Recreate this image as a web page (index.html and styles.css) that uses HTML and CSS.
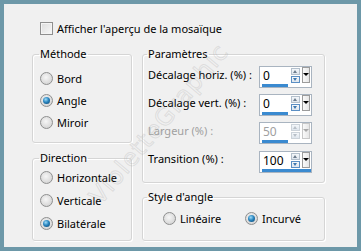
FILE: index.html
```html
<!DOCTYPE html>
<html lang="fr">
<head>
    <meta charset="UTF-8">
    <title>Mosaïque</title>
    <link rel="stylesheet" href="styles.css">
</head>
<body>

<div class="dialog">
    <label class="check-row"><span class="checkbox"></span>Afficher l'aperçu de la mosaïque</label>

    <div class="columns">
        <div class="col-left">
            <fieldset class="group methode">
                <legend>Méthode</legend>
                <div class="option"><span class="radio"></span>Bord</div>
                <div class="option"><span class="radio on"></span>Angle</div>
                <div class="option"><span class="radio"></span>Miroir</div>
            </fieldset>

            <fieldset class="group direction">
                <legend>Direction</legend>
                <div class="option"><span class="radio"></span>Horizontale</div>
                <div class="option"><span class="radio"></span>Verticale</div>
                <div class="option"><span class="radio on"></span>Bilatérale</div>
            </fieldset>
        </div>

        <div class="col-right">
            <fieldset class="group params">
                <legend>Paramètres</legend>
                <div class="param">
                    <span class="param-label">Décalage horiz. (%) :</span>
                    <div class="spin">
                        <div class="spin-top">
                            <span class="spin-value">0</span>
                            <span class="arrows"><i class="up"></i><i class="dn"></i></span>
                            <span class="drop"></span>
                        </div>
                        <span class="bar" style="width: 26px"></span>
                    </div>
                </div>
                <div class="param">
                    <span class="param-label">Décalage vert. (%) :</span>
                    <div class="spin">
                        <div class="spin-top">
                            <span class="spin-value">0</span>
                            <span class="arrows"><i class="up"></i><i class="dn"></i></span>
                            <span class="drop"></span>
                        </div>
                        <span class="bar" style="width: 26px"></span>
                    </div>
                </div>
                <div class="param disabled">
                    <span class="param-label">Largeur (%) :</span>
                    <div class="spin">
                        <div class="spin-top">
                            <span class="spin-value">50</span>
                            <span class="arrows"><i class="up"></i><i class="dn"></i></span>
                            <span class="drop"></span>
                        </div>
                        <span class="bar" style="width: 26px"></span>
                    </div>
                </div>
                <div class="param">
                    <span class="param-label">Transition (%) :</span>
                    <div class="spin">
                        <div class="spin-top">
                            <span class="spin-value">100</span>
                            <span class="arrows"><i class="up"></i><i class="dn"></i></span>
                            <span class="drop"></span>
                        </div>
                        <span class="bar" style="width: 49px"></span>
                    </div>
                </div>
            </fieldset>

            <fieldset class="group style">
                <legend>Style d'angle</legend>
                <div class="inline-options">
                    <div class="option first"><span class="radio"></span>Linéaire</div>
                    <div class="option"><span class="radio on"></span>Incurvé</div>
                </div>
            </fieldset>
        </div>
    </div>

    <div class="watermark">VioletteGraphic</div>
</div>

</body>
</html>
```

FILE: styles.css
```css
body {
    margin: 0;
    font-family: "Noto Sans", "Open Sans", sans-serif;
    font-size: 11px;
    color: #000;
}

.dialog {
    position: relative;
    width: 361px;
    height: 251px;
    box-sizing: border-box;
    border: 4px solid #6d98a8;
    background: #f0f0f0;
    padding: 18px 0 0 28px;
    overflow: hidden;
}

/* case à cocher */
.check-row {
    display: flex;
    align-items: center;
    height: 13px;
    padding-left: 8px;
    line-height: 13px;
}
.checkbox {
    width: 13px;
    height: 13px;
    box-sizing: border-box;
    border: 1px solid #8f8f8f;
    background: linear-gradient(135deg, #dcdcdc, #f8f8f8);
    box-shadow: inset 0 0 0 1px #f4f4f4;
    margin-right: 4px;
}

.columns {
    display: flex;
    gap: 10px;
    margin-top: 11px;
}
.col-left { width: 100px; }
.col-right { width: 183px; }

/* cadres de groupe */
.group {
    margin: 0;
    padding: 0;
    box-sizing: border-box;
    border: 1px solid #d5d5d5;
    border-radius: 3px;
    box-shadow: inset 1px 1px 0 #fff, 1px 1px 0 #fff;
    min-width: 0;
}
.group legend {
    margin-left: -1px;
    padding: 0 1px;
    line-height: 16px;
}
.methode { height: 97px; padding: 5px 0 0 7px; }
.direction { height: 91px; margin-top: 7px; padding: 0 0 0 7px; }
.params { height: 137px; padding: 4px 0 0 5px; }
.style { height: 52px; margin-top: 6px; padding: 2px 0 0 20px; }
.style legend { margin-left: -16px; }

/* boutons radio */
.option {
    display: flex;
    align-items: center;
    height: 22px;
}
.direction .option { height: 23px; }
.radio {
    position: relative;
    width: 13px;
    height: 13px;
    box-sizing: border-box;
    border-radius: 50%;
    border: 1px solid #8e8f8f;
    background: radial-gradient(circle at 45% 40%, #f6f6f6, #d4d4d4 80%);
    margin-right: 4px;
    flex: none;
}
.radio.on::after {
    content: "";
    position: absolute;
    left: 2px;
    top: 2px;
    width: 7px;
    height: 7px;
    border-radius: 50%;
    background: radial-gradient(circle at 40% 35%, #9fdcf8, #2a86c0 45%, #0d4a78 90%);
}

.inline-options { display: flex; }
.inline-options .first { width: 82px; }

/* paramètres */
.param {
    display: flex;
    align-items: center;
    height: 22px;
    margin-bottom: 6px;
}
.param:last-child { height: 23px; }
.param-label {
    width: 111px;
    flex: none;
    padding-bottom: 6px;
    white-space: nowrap;
}
.disabled { color: #a0a0a0; }

.spin {
    width: 53px;
    height: 22px;
    flex: none;
    box-sizing: border-box;
    border: 1px solid #a9b4c0;
    background: #fff;
    display: flex;
    flex-direction: column;
}
.spin-top {
    display: flex;
    height: 16px;
}
.spin-value {
    flex: 1;
    padding: 1px 0 0 3px;
    line-height: 15px;
    font-size: 12px;
}
.arrows {
    display: flex;
    flex-direction: column;
    gap: 1px;
    width: 9px;
    margin-top: 1px;
}
.arrows i {
    position: relative;
    height: 7px;
    box-sizing: border-box;
    border: 1px solid #b4c0cc;
    background: linear-gradient(#f4f7fa, #dfe6ee);
}
.arrows i.dn { border-color: #5b8fc4; }
.arrows i::after {
    content: "";
    position: absolute;
    left: 1px;
    top: 1px;
    border-left: 2.5px solid transparent;
    border-right: 2.5px solid transparent;
}
.arrows i.up::after { border-bottom: 3px solid #6c7c8c; }
.arrows i.dn::after { border-top: 3px solid #3e78b0; }
.disabled .arrows i { border-color: #ccd3da; }
.disabled .arrows i.up::after { border-bottom-color: #b8c0c8; }
.disabled .arrows i.dn::after { border-top-color: #b8c0c8; }

.drop {
    position: relative;
    width: 8px;
    height: 16px;
    margin: 0 1px 0 2px;
    box-sizing: border-box;
    border: 1px solid #9c9c9c;
    background: linear-gradient(90deg, #fafafa, #e6e6e6);
}
.drop::after {
    content: "";
    position: absolute;
    left: 0;
    top: 5px;
    border-left: 3px solid transparent;
    border-right: 3px solid transparent;
    border-top: 3px solid #000;
}
.disabled .drop { border-color: #c8c8c8; }
.disabled .drop::after { border-top-color: #a8a8a8; }

.bar {
    height: 3px;
    margin: 1px 0 0 2px;
    background: #3a8ad0;
}

/* filigrane */
.watermark {
    position: absolute;
    left: 50px;
    top: 106px;
    width: 210px;
    text-align: center;
    font-family: "DejaVu Sans", sans-serif;
    font-size: 24px;
    letter-spacing: 1px;
    color: transparent;
    -webkit-text-stroke: 1px rgba(150, 150, 150, 0.22);
    transform: rotate(-50deg);
    pointer-events: none;
}
```
